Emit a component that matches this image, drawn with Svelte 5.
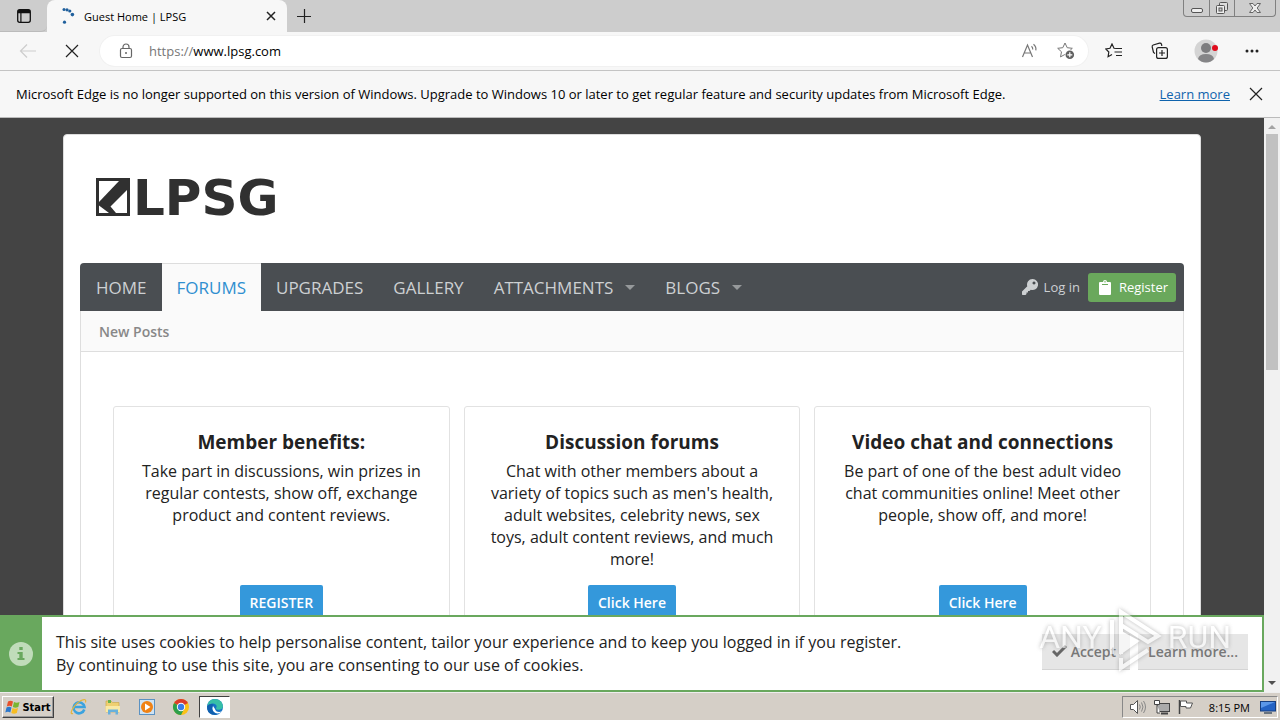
<script>
  const nav = [
    { label: 'HOME' },
    { label: 'FORUMS', active: true },
    { label: 'UPGRADES' },
    { label: 'GALLERY' },
    { label: 'ATTACHMENTS', menu: true },
    { label: 'BLOGS', menu: true }
  ];
  const cards = [
    {
      title: 'Member benefits:',
      text: 'Take part in discussions, win prizes in regular contests, show off, exchange product and content reviews.',
      action: 'REGISTER'
    },
    {
      title: 'Discussion forums',
      text: "Chat with other members about a variety of topics such as men's health, adult websites, celebrity news, sex toys, adult content reviews, and much more!",
      action: 'Click Here'
    },
    {
      title: 'Video chat and connections',
      text: 'Be part of one of the best adult video chat communities online! Meet other people, show off, and more!',
      action: 'Click Here'
    }
  ];
  let address = $state('www.lpsg.com');
</script>

<div class="desktop">
  <header class="browser">
    <div class="tabstrip">
      <button class="tabmenu" aria-label="Tab actions menu">
        <svg width="16" height="16" viewBox="0 0 16 16"><rect x="1.7" y="1.7" width="12.6" height="12.6" rx="2" fill="none" stroke="#111" stroke-width="1.3" /><path d="M2 2h12v3.2H5.5V14H4.3V5.2H2z" fill="#111" /></svg>
      </button>
      <div class="tab">
        <svg width="16" height="16" viewBox="0 0 16 16" fill="#1f5f9c"><circle cx="4" cy="1.6" r="1.5" /><circle cx="7" cy="1.8" r="1.6" /><circle cx="9.8" cy="3" r="1.6" /><circle cx="12.4" cy="6.6" r="1.8" /><circle cx="4.5" cy="14.2" r="1.6" /></svg>
        <span class="tabtitle">Guest Home | LPSG</span>
        <button aria-label="Close tab">
          <svg width="10" height="10" viewBox="0 0 10 10"><path d="M1 1l8 8M9 1l-8 8" stroke="#222" stroke-width="1.5" /></svg>
        </button>
      </div>
      <button class="newtab" aria-label="New tab">
        <svg width="16" height="16" viewBox="0 0 16 16"><path d="M8.5 1v14M1 8.500h14" stroke="#222" stroke-width="1.2" /></svg>
      </button>
      <div class="winbuttons">
        <button aria-label="Minimize"><svg width="14" height="14" viewBox="0 0 14 14"><rect x="1.5" y="7.5" width="11" height="4" rx="1.5" fill="#eee" stroke="#555" /></svg></button>
        <button aria-label="Restore"><svg width="14" height="14" viewBox="0 0 14 14"><rect x="4.5" y="1.5" width="8" height="8" rx="1" fill="#ddd" stroke="#555" /><rect x="1.5" y="4.5" width="8" height="8" rx="1" fill="#eee" stroke="#555" /><rect x="4" y="7" width="3" height="3" fill="#ccc" stroke="#555" /></svg></button>
        <button class="wide" aria-label="Close window"><svg width="14" height="14" viewBox="0 0 14 14"><path d="M1.500 2.500h3.500L7 5l2-2.500h3.500L9.200 7l3.300 4.500H9L7 9l-2 2.500H1.500L4.800 7z" fill="#eee" stroke="#666" /></svg></button>
      </div>
    </div>

    <div class="toolbar">
      <button class="tool" aria-label="Back"><svg width="18" height="16" viewBox="0 0 18 16"><path d="M8 1.500L1.500 8 8 14.500M1.500 8H17" fill="none" stroke="#cdcdcd" stroke-width="1.2" /></svg></button>
      <button class="tool stop" aria-label="Stop loading"><svg width="14" height="14" viewBox="0 0 14 14"><path d="M1 1l12 12M13 1L1 13" stroke="#222" stroke-width="1.2" /></svg></button>
      <div class="address">
        <svg width="14" height="16" viewBox="0 0 14 16"><rect x="1.500" y="5.500" width="11" height="9" rx="1.500" fill="none" stroke="#666" stroke-width="1.200" /><path d="M4 5.500V4a3 3 0 0 1 6 0v1.500" fill="none" stroke="#666" stroke-width="1.200" /><circle cx="7" cy="10" r="1" fill="#666" /></svg>
        <label class="field"><span>https://</span><input aria-label="Address" bind:value={address} /></label>
        <button aria-label="Read aloud"><svg width="18" height="16" viewBox="0 0 18 16" fill="none" stroke="#777" stroke-width="1.200"><path d="M1.500 14L6.500 2l5 12M3.300 10h6.400M10.500 3.200q1.500 1.300 1.200 3.300M12.500 1.300q3 2.400 2.300 6" /></svg></button>
        <button aria-label="Add to favorites"><svg width="18" height="18" viewBox="0 0 18 18"><path d="M8 1l2.200 4.700 5.100.6-3.800 3.500 1 5.100L8 12.400l-4.500 2.500 1-5.100L.7 6.300l5.100-.6z" fill="none" stroke="#777" /><circle cx="12.800" cy="12.800" r="5" fill="#fff" /><circle cx="12.800" cy="12.800" r="4.300" fill="#606060" /><path d="M12.800 10.300v5M10.300 12.800h5" stroke="#fff" stroke-width="1.200" /></svg></button>
      </div>
      <button class="tool" aria-label="Favorites"><svg width="18" height="16" viewBox="0 0 18 16" fill="none" stroke="#222" stroke-width="1.200"><path d="M11 5.500L9 5.300 7 1 5 5.300.8 6l3 3-.7 4.700L7 11.500M11 5.500h6M9.500 9H17M11 12.500h6" /></svg></button>
      <button class="tool" aria-label="Collections"><svg width="18" height="18" viewBox="0 0 18 18" fill="none" stroke="#222" stroke-width="1.200"><path d="M4 11.500L2.500 10.500 1.200 5q-.3-1.500 1-2L8.500 1.200q1.500-.3 2 1L10.800 4" /><rect x="5.600" y="5.600" width="10.800" height="10.800" rx="2" /><path d="M11 8v6M8 11h6" /></svg></button>
      <button class="tool" aria-label="Profile"><svg width="24" height="24" viewBox="0 0 24 24"><circle cx="12" cy="12" r="11.500" fill="#d4d4d4" /><circle cx="12" cy="9" r="5" fill="#7d7d7f" /><path d="M4 20q1-5 8-5t8 5q-3.500 3.500-8 3.500T4 20z" fill="#858587" /><circle cx="21" cy="9" r="3" fill="#e00b1c" /></svg></button>
      <button class="tool" aria-label="Settings and more"><svg width="16" height="6" viewBox="0 0 16 6" fill="#222"><circle cx="3" cy="3" r="1.500" /><circle cx="8" cy="3" r="1.500" /><circle cx="13" cy="3" r="1.500" /></svg></button>
    </div>

    <div class="infobar">
      <p>Microsoft Edge is no longer supported on this version of Windows. Upgrade to Windows 10 or later to get regular feature and security updates from Microsoft Edge.</p>
      <a href="#learn">Learn more</a>
      <button aria-label="Dismiss message"><svg width="14" height="14" viewBox="0 0 14 14"><path d="M1 1l12 12M13 1L1 13" stroke="#222" stroke-width="1.200" /></svg></button>
    </div>
  </header>

  <div class="viewport">
    <main class="page">
      <div class="sheet">
        <a class="logo" href="#home">
          <svg width="34" height="38" viewBox="0 0 34 38"><rect width="34" height="38" fill="#303030" /><path d="M3 3H23L3 24z" fill="#fff" /><path d="M31 12V35H20L14.500 28.500z" fill="#fff" /><path d="M3 27.500L13 35H3z" fill="#fff" /></svg>
          <span>LPSG</span>
        </a>
        <nav class="mainnav">
          {#each nav as item}
            <a href="#nav" class:active={item.active}>{item.label}{#if item.menu}<i></i>{/if}</a>
          {/each}
          <div class="account">
            <a class="login" href="#login"><svg width="16" height="16" viewBox="0 0 16 16"><path d="M10.500 0a5.500 5.500 0 1 1-1.700 10.700L7.500 12H6v1.500H4.500V15L3.500 16H.5L0 15.500V12.500L5.300 7.200A5.500 5.500 0 0 1 10.500 0zM12 2.500a1.500 1.500 0 1 0 .01 0z" fill="#cdd0d2" fill-rule="evenodd" /></svg>Log in</a>
            <a class="register" href="#register"><svg width="12" height="15" viewBox="0 0 12 15"><path d="M1 2h3q0-2 2-2t2 2h3q1 0 1 1v11q0 1-1 1H1q-1 0-1-1V3q0-1 1-1z" fill="#fff" /><path d="M3 4.500h6M6 1v1.500" stroke="#6aa85c" /></svg>Register</a>
          </div>
        </nav>
        <div class="subnav"><a href="#new">New Posts</a></div>
        <section class="cards">
          {#each cards as card}
            <article>
              <h2>{card.title}</h2>
              <p>{card.text}</p>
              <a class="action" href="#action">{card.action}</a>
            </article>
          {/each}
        </section>
      </div>
    </main>

    <div class="scrollbar">
      <svg width="8" height="5" viewBox="0 0 8 5"><path d="M0 5L4 1l4 4z" fill="#a3a3a3" /></svg>
      <div class="thumb"></div>
      <svg width="8" height="5" viewBox="0 0 8 5"><path d="M0 0L4 4l4-4z" fill="#505050" /></svg>
    </div>

    <aside class="cookies">
      <div class="mark"><svg width="24" height="24" viewBox="0 0 24 24"><circle cx="12" cy="12" r="12" fill="#c0dcba" /><path d="M10.300 5h3.400v3h-3.400zM8.500 10h5.200v6H15.500v2h-7v-2h1.800v-4H8.500z" fill="#69a85e" /></svg></div>
      <p>This site uses cookies to help personalise content, tailor your experience and to keep you logged in if you register.<br />By continuing to use this site, you are consenting to our use of cookies.</p>
      <div class="choices">
        <button class="accept"><svg width="15" height="12" viewBox="0 0 15 12"><path d="M1 6l4 4 9-9" fill="none" stroke="#666" stroke-width="3" /></svg>Accept</button>
        <button>Learn more...</button>
      </div>
    </aside>

    <div class="watermark">
      <span>ANY</span>
      <svg width="54" height="64" viewBox="0 0 54 64" fill="none" stroke="#fff"><path d="M4 46V12M13 46V4L50 28 40 34 13 17" stroke-width="4" /><path d="M13 24L30 33 13 45z" fill="#fff" stroke-width="2" /><path d="M13 50V60L40 42" stroke-width="4" /></svg>
      <span>RUN</span>
    </div>
  </div>

  <footer class="taskbar">
    <button class="start"><svg width="16" height="15" viewBox="0 0 16 15"><path d="M3 1.500q2.500-1.500 5 0L6.800 6.500Q4.500 5 1.800 6.500z" fill="#e8502a" /><path d="M9 2q2.500 1.300 5.500 0L13.300 7q-2.800 1.300-5.500 0z" fill="#7ab530" /><path d="M1.500 7.500q2.500-1.500 5 0L5.300 12.500Q3 11 .3 12.500z" fill="#2c78cc" /><path d="M7.500 8q2.500 1.300 5.500 0L11.800 13q-2.800 1.300-5.500 0z" fill="#f7bd22" /></svg>Start</button>
    <button class="app" aria-label="Internet Explorer"><svg width="18" height="18" viewBox="0 0 18 18"><path d="M14.300 11.500A5.500 5.500 0 1 1 14.500 9H5" fill="none" stroke="#3ba3df" stroke-width="2.600" /><path d="M3 15.500q-3 1-1-3.500Q5 6 11 2.500q6-2.500 4.500 2" fill="none" stroke="#e4b53c" stroke-width="1.200" /></svg></button>
    <button class="app" aria-label="File Explorer"><svg width="18" height="18" viewBox="0 0 18 18"><path d="M2 3h5l1.500 1.500H15V14H2z" fill="#efd071" stroke="#c9a545" stroke-width=".6" /><path d="M4 2h3v3H4z" fill="#67b24b" /><path d="M1.500 8h14.500v6H1.500z" fill="#f9e9a5" /><path d="M4 16.500v-5h10v5h-2.500v-2.500h-5v2.500z" fill="#68b1dc" /></svg></button>
    <button class="app" aria-label="Media Player"><svg width="18" height="18" viewBox="0 0 18 18"><rect x="1.500" y="1.500" width="15" height="15" fill="#cfe3f3" stroke="#5b92c2" /><circle cx="9" cy="9" r="6" fill="#f08214" /><path d="M7 5.500L12.500 9 7 12.500z" fill="#fff" /></svg></button>
    <button class="app" aria-label="Chrome"><svg width="18" height="18" viewBox="0 0 18 18"><circle cx="9" cy="9" r="8" fill="#fbc116" /><path d="M9 9L2.070 5A8 8 0 0 1 15.930 5z" fill="#dc3b2c" /><path d="M9 9L2.070 5A8 8 0 0 0 9 17L12 11z" fill="#2d9f4b" /><circle cx="9" cy="9" r="4.200" fill="#fff" /><circle cx="9" cy="9" r="3.200" fill="#3b7de8" /></svg></button>
    <button class="app current" aria-label="Microsoft Edge"><svg width="18" height="18" viewBox="0 0 18 18"><circle cx="9" cy="9" r="8" fill="#1673c6" /><path d="M1.200 8Q2.500 1 9 1q7.500.5 8 7.500-.5 3-4 3.200-3 0-3-1.500 1-1.200.5-2.700Q9 5 6 5.500 2.500 6 1.200 8z" fill="#37bfa7" /><path d="M7 8q-2 4.500 2.500 7 3.500 1.300 6.500-1.500-6 1.500-7-2.500z" fill="#fff" /><path d="M1.200 8Q4 5 7.500 6.500 5.500 8 6 11q1 4 5.500 5.600Q2.500 18 1.200 11z" fill="#1160ae" /></svg></button>
    <div class="tray">
      <svg width="18" height="16" viewBox="0 0 18 16" stroke="#555" fill="none"><path d="M1.500 5.500h3l4-4v13l-4-4h-3z" fill="#fff" /><path d="M10.500 5.500q1.500 2.500 0 5M12.500 3.500q3 4.500 0 9M14.500 2q4 6 0 12" stroke="#888" /></svg>
      <svg width="18" height="16" viewBox="0 0 18 16"><rect x="4.500" y="4.500" width="12" height="8" fill="#aaa" stroke="#444" /><path d="M8 14.500h7" stroke="#444" stroke-width="2" /><path d="M1.500 1.500h5v4h-5zM4 5.500v8.500h3" fill="#fff" stroke="#444" /></svg>
      <svg width="18" height="16" viewBox="0 0 18 16"><path d="M2.500 1v14" stroke="#444" stroke-width="1.500" /><path d="M3.500 2h6v2h6l-2 5H9V7.500H3.500z" fill="#fff" stroke="#555" /></svg>
      <time>8:15 PM</time>
      <svg width="16" height="14" viewBox="0 0 16 14"><rect x=".5" y="1.500" width="15" height="9.500" fill="#2463c4" stroke="#173f80" /><path d="M1 2h14L1 8z" fill="#5b97e8" /><path d="M4 13h8" stroke="#456" stroke-width="1.500" /></svg>
    </div>
  </footer>
</div>

<style>
  :global(body) { margin: 0; }
  * { box-sizing: border-box; }
  .desktop { display: flex; flex-direction: column; height: 100vh; overflow: hidden; font-family: 'Open Sans', sans-serif; font-size: 13px; color: #000; }
  button { display: flex; align-items: center; justify-content: center; padding: 0; border: 0; background: none; font: inherit; color: inherit; }
  svg { display: block; flex: none; }
  p, h2 { margin: 0; }

  .tabstrip { display: flex; height: 32px; background: #cdcdcd; }
  .tabmenu { width: 47px; border-bottom: 1px solid #bbb; border-radius: 0 0 6px 0; }
  .tab { display: flex; align-items: center; gap: 8px; width: 240px; padding: 0 11px 0 13px; background: #f7f7f7; border-radius: 8px 8px 0 0; font-size: 11px; }
  .tabtitle { flex: 1; }
  .newtab { width: 34px; }
  .winbuttons { display: flex; height: 17px; margin: 0 4px 0 auto; border: 1px solid #808080; border-top: 0; border-radius: 0 0 4px 4px; }
  .winbuttons button { width: 25px; }
  .winbuttons button + button { border-left: 1px solid #808080; }
  .winbuttons .wide { width: 41px; }

  .toolbar { display: flex; align-items: center; height: 39px; padding: 0 5px; background: #f7f7f7; border-bottom: 1px solid #c4c4c4; }
  .tool { width: 46px; height: 30px; }
  .stop { width: 42px; margin-right: 7px; }
  .address { display: flex; flex: 1; align-items: center; height: 30px; margin-right: 3px; padding: 0 14px 0 19px; background: #fff; border-radius: 15px; box-shadow: 0 0 0 1px #f1f1f1; }
  .address button { width: 36px; height: 28px; }
  .address button:last-child { margin-right: -10px; }
  .field { display: flex; flex: 1; align-items: center; margin-left: 16px; color: #777; }
  .field input { flex: 1; min-width: 0; padding: 0; border: 0; outline: 0; background: none; font: inherit; color: #000; }

  .infobar { display: flex; align-items: center; height: 47px; padding: 0 17px 0 16px; background: #f7f7f7; border-bottom: 1px solid #bbb; }
  .infobar p { flex: 1; }
  .infobar a { margin-right: 19px; color: #0f63ad; }

  .viewport { position: relative; display: flex; flex: 1; min-height: 0; background: #444; }
  .page { flex: 1; min-width: 0; padding: 16px 63px; overflow: hidden; }
  .sheet { padding: 0 16px 16px; background: #fff; border: 1px solid #ddd; border-radius: 4px; color: #222; }
  .logo { display: flex; align-items: center; gap: 3px; height: 128px; padding: 0 16px 4px; color: #303030; text-decoration: none; font: bold 50px/60px 'DejaVu Sans', sans-serif; }
  .logo span { padding-top: 2px; }
  .mainnav { display: flex; height: 48px; padding-left: 1px; background: #4a4e52; border-radius: 4px 4px 0 0; font-size: 17px; }
  .mainnav a { display: flex; align-items: center; padding: 0 15px; color: #cdd0d2; text-decoration: none; }
  .mainnav a.active { background: #fafafa; color: #2f8fd0; border-top: 1px solid #ddd; }
  .mainnav i { margin-left: 12px; border: 5px solid transparent; border-top-color: #96999b; border-bottom: 0; }
  .account { display: flex; align-items: center; margin-left: auto; padding-right: 8px; font-size: 13px; }
  .account .login { gap: 6px; padding: 0 8px; }
  .account .register { gap: 8px; height: 29px; padding: 0 8px 0 11px; background: #6aa85c; border-radius: 3px; color: #fff; }
  .subnav { display: flex; align-items: center; height: 41px; padding: 0 18px; background: #fafafa; border: 1px solid #dedede; border-top: 0; }
  .subnav a { color: #888; font-size: 14px; font-weight: 600; text-decoration: none; }
  .cards { display: grid; grid-template-columns: repeat(3, 1fr); gap: 14px; padding: 54px 32px 32px; border: 1px solid #dedede; border-top: 0; }
  article { display: flex; flex-direction: column; align-items: center; padding: 22px 20px 24px; border: 1px solid #e2e2e2; border-radius: 3px; text-align: center; }
  h2 { margin-bottom: 5px; font-size: 19px; line-height: 26px; }
  article p { margin-bottom: 15px; font-size: 16px; line-height: 22px; }
  .action { margin-top: auto; padding: 0 10px; background: #3498db; border-radius: 2px; color: #fff; font-size: 14px; font-weight: 600; line-height: 36px; text-decoration: none; }

  .scrollbar { display: flex; flex-direction: column; align-items: center; width: 16px; padding: 6px 0; background: #f1f1f1; }
  .thumb { width: 12px; height: 42%; margin: 5px 0 auto; background: #c1c1c1; }

  .cookies { position: absolute; left: 0; right: 16px; bottom: 0; display: flex; align-items: center; border: 2px solid #69a85e; border-left: 0; background: #fff; color: #222; }
  .mark { display: grid; place-items: center; align-self: stretch; width: 42px; background: #69a85e; }
  .cookies p { flex: 1; padding: 14px 14px 13px; font-size: 16px; line-height: 23px; }
  .choices { display: flex; gap: 8px; margin: 0 14px 4px 0; font-size: 14px; font-weight: 600; color: #777; }
  .choices button { gap: 4px; height: 36px; padding: 0 10px; background: #e6e6e6; border-bottom: 1px solid #d4d4d4; }
  .choices .accept { padding: 0 14px 0 10px; }
  .watermark { position: absolute; right: 49px; bottom: 20px; display: flex; align-items: flex-start; gap: 6px; opacity: .6; color: #fff; font: 32px/58px 'Roboto', sans-serif; filter: drop-shadow(0 0 2px #888); pointer-events: none; }

  .taskbar { display: flex; align-items: center; height: 28px; padding: 2px 2px 1px; background: #d5cfc7; border-top: 1px solid #eee; }
  .start { gap: 1px; height: 22px; width: 52px; margin-right: 8px; border: 1px solid; border-color: #fff #404040 #404040 #fff; box-shadow: inset -1px -1px #999; font: bold 11px 'DejaVu Sans Condensed', 'Open Sans', sans-serif; }
  .app { width: 34px; height: 22px; }
  .current { width: 31px; margin-left: 1px; background: #fff; border: 1px solid; border-color: #404040 #fff #fff #404040; }
  .tray { display: flex; align-items: center; gap: 6px; height: 22px; margin-left: auto; padding: 0 1px 0 6px; border: 1px solid; border-color: #888 #fff #fff #888; font-size: 11px; }
  .tray time { margin: 0 4px 0 8px; }
</style>
